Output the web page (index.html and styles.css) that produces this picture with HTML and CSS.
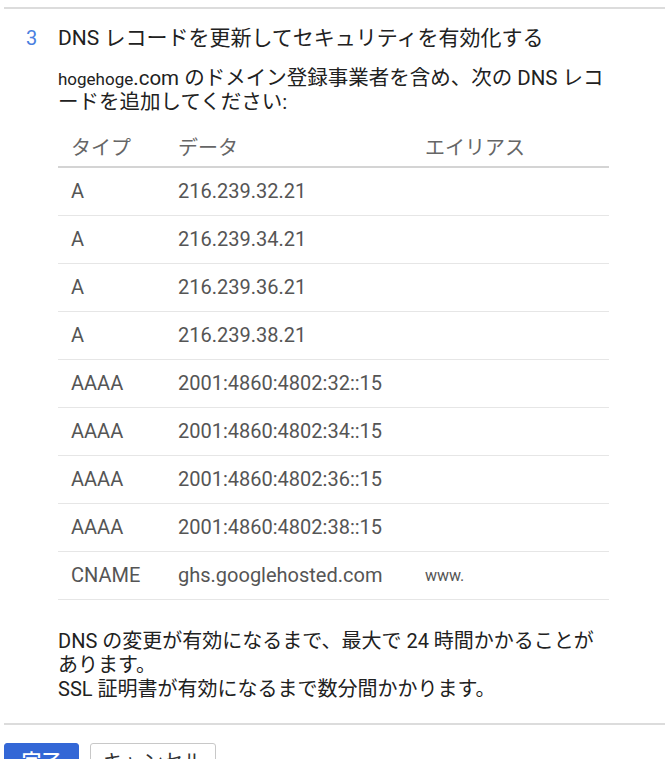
FILE: index.html
```html
<!DOCTYPE html>
<html lang="ja">
<head>
  <meta charset="UTF-8" />
  <meta name="viewport" content="width=device-width, initial-scale=1.0"/>
  <title>DNS レコード</title>
  <link rel="stylesheet" href="styles.css">
</head>
<body>
  <div class="step">
    <div class="step-head">
      <span class="step-num">3</span>
      <h2 class="step-title">DNS レコードを更新してセキュリティを有効化する</h2>
    </div>

    <div class="step-body">
      <p class="intro"><span class="domain">hogehoge</span>.com のドメイン登録事業者を含め、次の DNS レコードを追加してください:</p>

      <table class="records">
        <thead>
          <tr>
            <th class="col-type">タイプ</th>
            <th class="col-data">データ</th>
            <th class="col-alias">エイリアス</th>
          </tr>
        </thead>
        <tbody>
          <tr><td>A</td><td>216.239.32.21</td><td></td></tr>
          <tr><td>A</td><td>216.239.34.21</td><td></td></tr>
          <tr><td>A</td><td>216.239.36.21</td><td></td></tr>
          <tr><td>A</td><td>216.239.38.21</td><td></td></tr>
          <tr><td>AAAA</td><td>2001:4860:4802:32::15</td><td></td></tr>
          <tr><td>AAAA</td><td>2001:4860:4802:34::15</td><td></td></tr>
          <tr><td>AAAA</td><td>2001:4860:4802:36::15</td><td></td></tr>
          <tr><td>AAAA</td><td>2001:4860:4802:38::15</td><td></td></tr>
          <tr><td>CNAME</td><td>ghs.googlehosted.com</td><td class="alias">www.</td></tr>
        </tbody>
      </table>

      <p class="note">DNS の変更が有効になるまで、最大で 24 時間かかることがあります。<br>SSL 証明書が有効になるまで数分間かかります。</p>
    </div>
  </div>

  <div class="actions">
    <button class="btn btn-primary">完了</button>
    <button class="btn">キャンセル</button>
  </div>
</body>
</html>
```

FILE: styles.css
```css
* {
  box-sizing: border-box;
  margin: 0;
  padding: 0;
}

body {
  font-family: 'Roboto', 'Noto Sans CJK JP', sans-serif;
  color: #212121;
  background: #fff;
  padding: 7px 0 0 4px;
  overflow: hidden;
}

.step {
  border-top: 2px solid #dcdcdc;
  padding: 17px 0 0;
}

.step-head {
  display: flex;
  align-items: baseline;
  line-height: 24px;
}

.step-num {
  width: 54px;
  padding-left: 22px;
  color: #4a7fe0;
  font-size: 20px;
}

.step-title {
  font-size: 21px;
  font-weight: 400;
}

.step-body {
  padding-left: 54px;
  width: 610px;
}

.intro {
  margin-top: 17px;
  font-size: 20.5px;
  line-height: 23px;
}

.domain {
  font-size: 17px;
}

.records {
  margin-top: 16px;
  width: 551px;
  border-collapse: collapse;
  font-size: 20px;
  color: #555;
}

.records th {
  font-weight: 400;
  text-align: left;
  color: #666;
  height: 37px;
  vertical-align: bottom;
  padding: 0 0 5px 13px;
  border-bottom: 2px solid #d4d4d4;
}

.records td {
  height: 48px;
  padding-left: 13px;
  border-bottom: 1px solid #e6e6e6;
}

.col-type {
  width: 107px;
}

.col-data {
  width: 247px;
}

.records .alias {
  font-size: 16px;
}

.note {
  margin-top: 29px;
  font-size: 20px;
  line-height: 24px;
  padding-right: 10px;
}

.actions {
  margin-top: 22px;
  border-top: 2px solid #dcdcdc;
  padding-top: 18px;
  display: flex;
  gap: 11px;
}

.btn {
  font-family: inherit;
  font-size: 20px;
  height: 36px;
  padding: 0 12px;
  border: 1px solid #c8c8c8;
  border-radius: 3px;
  background: #fff;
  color: #333;
}

.btn-primary {
  width: 75px;
  background: #3367d6;
  border-color: #3367d6;
  color: #fff;
  font-weight: 500;
}
```
